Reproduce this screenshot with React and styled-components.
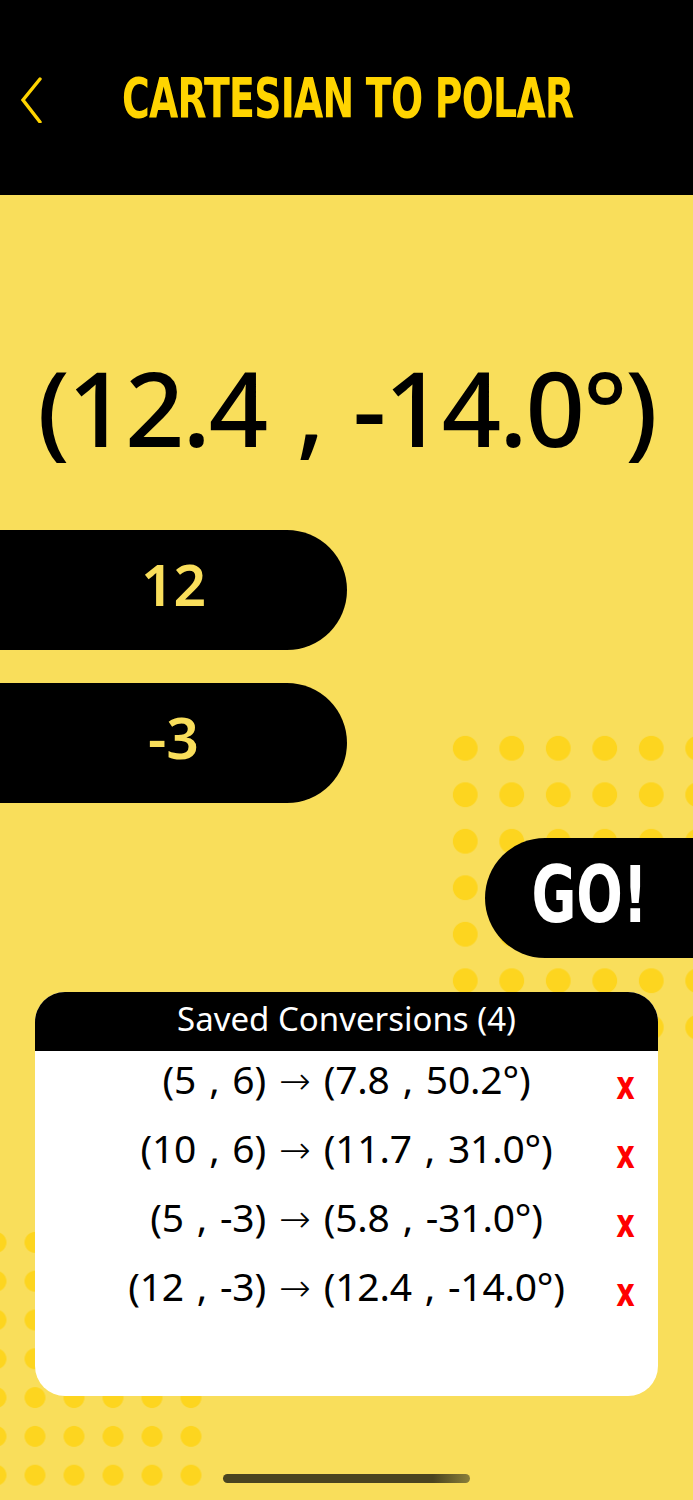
import styled, { createGlobalStyle } from 'styled-components';

const conversions = [
  { from: '(5 , 6)', to: '(7.8 , 50.2°)' },
  { from: '(10 , 6)', to: '(11.7 , 31.0°)' },
  { from: '(5 , -3)', to: '(5.8 , -31.0°)' },
  { from: '(12 , -3)', to: '(12.4 , -14.0°)' },
];

const App = () => {
  return (
    <>
      <GlobalStyle />
      <StyledPage>
        <StyledDots $variant='top' />
        <StyledDots $variant='bottom' />
        <StyledHeader>
          <StyledBack aria-label='back'>
            <svg width='24' height='48' viewBox='0 0 24 48'>
              <polyline
                points='19,4 2,25 19,47'
                fill='none'
                stroke='#FFD400'
                strokeWidth='3.4'
                strokeLinecap='round'
                strokeLinejoin='miter'
              />
            </svg>
          </StyledBack>
          <h1>CARTESIAN TO POLAR</h1>
        </StyledHeader>

        <StyledResult>(12.4 , -14.0°)</StyledResult>

        <StyledPill>12</StyledPill>
        <StyledPill $second>-3</StyledPill>

        <StyledGoRow>
          <StyledGo>
            <span>GO!</span>
          </StyledGo>
        </StyledGoRow>

        <StyledCard>
          <StyledCardTitle>Saved Conversions (4)</StyledCardTitle>
          <StyledList>
            {conversions.map((c) => (
              <StyledRow key={c.from}>
                <span>
                  {c.from} <StyledArrow>→</StyledArrow> {c.to}
                </span>
                <StyledRemove>x</StyledRemove>
              </StyledRow>
            ))}
          </StyledList>
        </StyledCard>

        <StyledHome />
      </StyledPage>
    </>
  );
};

//styled-components
const GlobalStyle = createGlobalStyle`
  body {
    margin: 0;
    background: #f9de5b;
    font-family: 'Noto Sans', 'Open Sans', sans-serif;
  }
`;

const StyledPage = styled.div`
  position: relative;
  width: 693px;
  min-height: 1500px;
  overflow: hidden;
  background: #f9de5b;
  display: flex;
  flex-direction: column;
`;

const StyledDots = styled.div`
  position: absolute;
  z-index: 0;
  background-image: radial-gradient(
    circle,
    #fdd51f ${(p) => (p.$variant === 'top' ? '12px' : '10px')},
    transparent ${(p) => (p.$variant === 'top' ? '12.8px' : '10.8px')}
  );
  ${(p) =>
    p.$variant === 'top'
      ? `
    left: 441.75px;
    top: 724.75px;
    width: 260px;
    height: 326px;
    background-size: 46.5px 46.5px;
  `
      : `
    left: 0;
    top: 1222.5px;
    width: 211px;
    height: 272px;
    background-size: 39px 38.8px;
    background-position: -23.5px 0;
  `}
`;

const StyledHeader = styled.header`
  position: relative;
  z-index: 1;
  height: 195px;
  background: #000;
  display: flex;
  align-items: center;
  padding-left: 21px;
  box-sizing: border-box;
  h1 {
    margin: 0 0 0 77px;
    color: #ffd400;
    font-family: 'DejaVu Sans Condensed', 'DejaVu Sans', sans-serif;
    font-weight: bold;
    font-size: 55px;
    letter-spacing: -1px;
    transform: scaleX(0.765);
    transform-origin: left center;
    white-space: nowrap;
  }
`;

const StyledBack = styled.div`
  width: 24px;
  height: 48px;
  display: flex;
  margin-top: 2px;
`;

const StyledResult = styled.div`
  position: relative;
  z-index: 1;
  margin-top: 146px;
  height: 130px;
  display: flex;
  align-items: center;
  justify-content: center;
  font-size: 104px;
  font-weight: 500;
  color: #000;
  letter-spacing: -2px;
  word-spacing: 5px;
  white-space: nowrap;
`;

const StyledPill = styled.div`
  position: relative;
  z-index: 1;
  width: 347px;
  height: 120px;
  margin-top: ${(p) => (p.$second ? '33px' : '59px')};
  background: #000;
  border-radius: 0 60px 60px 0;
  display: flex;
  align-items: center;
  justify-content: center;
  padding-bottom: 12px;
  box-sizing: border-box;
  color: #f9de5b;
  font-size: 57px;
  font-weight: 600;
`;

const StyledGoRow = styled.div`
  position: relative;
  z-index: 1;
  display: flex;
  justify-content: flex-end;
  margin-top: 35px;
`;

const StyledGo = styled.button`
  width: 208px;
  height: 120px;
  border: none;
  padding: 0 0 6px 0;
  background: #000;
  border-radius: 60px 0 0 60px;
  color: #fff;
  font-family: 'DejaVu Sans Condensed', 'DejaVu Sans', sans-serif;
  font-weight: bold;
  font-size: 78px;
  display: flex;
  align-items: center;
  justify-content: center;
  span {
    display: inline-block;
    transform: scaleX(0.78);
    margin-left: 2px;
  }
`;

const StyledCard = styled.section`
  position: relative;
  z-index: 1;
  margin: 34px 35px 0;
  height: 404px;
  background: #fff;
  border-radius: 30px;
  overflow: hidden;
  display: flex;
  flex-direction: column;
`;

const StyledCardTitle = styled.div`
  height: 59px;
  background: #000;
  color: #fff;
  font-size: 33px;
  display: flex;
  align-items: center;
  justify-content: center;
  padding-bottom: 6px;
  box-sizing: border-box;
`;

const StyledList = styled.div`
  display: flex;
  flex-direction: column;
  margin-top: -7px;
`;

const StyledRow = styled.div`
  position: relative;
  height: 69px;
  display: flex;
  align-items: center;
  justify-content: center;
  font-size: 39px;
  color: #000;
  letter-spacing: -0.2px;
  word-spacing: 3px;
  white-space: nowrap;
`;

const StyledArrow = styled.span`
  font-family: 'DejaVu Sans', sans-serif;
  font-size: 38px;
  font-weight: 300;
  letter-spacing: 0;
`;

const StyledRemove = styled.span`
  position: absolute;
  right: 21px;
  top: 50%;
  transform: translateY(-36%) scaleX(0.8);
  color: #ff0000;
  font-family: 'DejaVu Sans Condensed', 'DejaVu Sans', sans-serif;
  font-weight: bold;
  font-size: 40px;
`;

const StyledHome = styled.div`
  position: relative;
  z-index: 1;
  width: 247px;
  height: 9px;
  border-radius: 5px;
  margin: 78px auto 0;
  background: linear-gradient(90deg, #4a4420 85%, #8a7f3a 100%);
`;

export default App;
